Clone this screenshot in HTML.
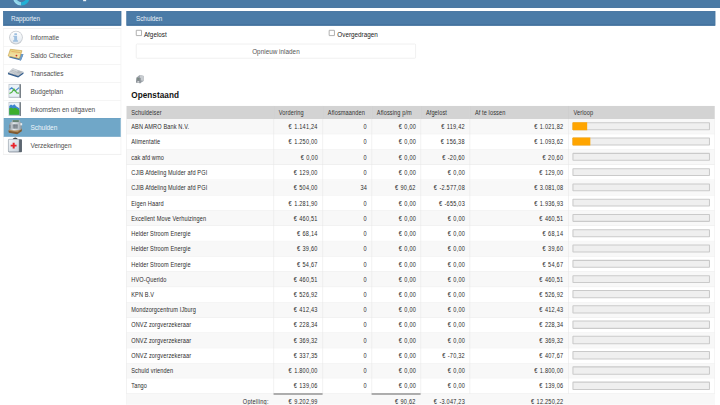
<!DOCTYPE html>
<html><head><meta charset="utf-8"><title>Schulden</title>
<style>
html,body{margin:0;padding:0;width:720px;height:405px;overflow:hidden;background:#fff;}
#w{position:absolute;left:0;top:0;width:1366px;height:768px;transform:scale(0.527086);transform-origin:0 0;font-family:"Liberation Sans",sans-serif;overflow:hidden;background:#fff;}
.abs{position:absolute;}
.topbar{left:0;top:0;width:1366px;height:14.4px;background:#4b7aa5;border-bottom:1px solid #3f6d98;}
.hdr{top:21.4px;height:26px;background:#4b7ba7;border:1px solid #44729d;box-shadow:inset 0 -1.5px 0 #3f6d98;color:#e9f0f6;font-size:12px;line-height:26px;}
.menu{left:6px;top:54px;width:222px;border:1px solid #ececec;border-top:1px solid #e6e6e6;}
.item{position:relative;height:33px;border-bottom:1px solid #ececec;font-size:12.4px;color:#505050;}
.item .t{position:absolute;left:50.8px;top:0;line-height:34px;letter-spacing:-0.1px;}
.item .ic{position:absolute;}
.item.act .t{top:1px;}
.item.act{background:#70a7c8;color:#eef5fa;border-bottom-color:#6299bf;box-shadow:inset 0 1px 0 #6299bf;margin-top:-1px;height:34px;}
.cb{width:11px;height:11px;border:1px solid #6a6a6a;border-radius:1px;background:#fff;box-sizing:border-box;}
.lbl{font-size:12px;color:#222;}
.btn{left:258px;top:82.8px;width:531px;height:28px;border:1px solid #e4e4e4;border-radius:2px;background:#fff;font-size:12px;color:#555;text-align:center;line-height:27px;box-sizing:border-box;letter-spacing:0.05px;padding-top:1px;}
.title{left:249px;top:171.3px;font-size:15.5px;font-weight:bold;color:#111;letter-spacing:0.1px;}
.c{position:absolute;box-sizing:border-box;font-size:12px;color:#2c2c2c;white-space:nowrap;overflow:hidden;}
.th{background:#d3d3d3;color:#333;padding-left:9px;}
.th span{position:relative;top:1.5px;}
.r{text-align:right;padding-right:8.5px;}
.c span{display:inline-block;letter-spacing:0.25px;transform:scaleX(0.885);transform-origin:0 50%;}
.r span{letter-spacing:0.5px;word-spacing:1px;transform:scaleX(0.88);transform-origin:100% 50%;}
.th span{letter-spacing:0.2px;transform:scaleX(0.89);}
.l{padding-left:9px;}
.bar{position:absolute;height:15.6px;box-sizing:border-box;border:2px solid #cacaca;border-radius:1.5px;background:#efefef;}
.fill{position:absolute;left:-2px;top:-2px;bottom:-2px;background:#ffa500;border-radius:1.5px 0 0 1.5px;}
</style></head><body><div id="w">

<div class="abs topbar"></div>
<div class="abs hdr" style="left:6px;width:222px;"><span style="padding-left:14px;letter-spacing:-0.15px">Rapporten</span></div>
<div class="abs hdr" style="left:240px;width:1115px;"><span style="padding-left:17px">Schulden</span></div>
<div class="abs menu">
<div class="item"><span class="t">Informatie</span></div>
<div class="item"><span class="t">Saldo Checker</span></div>
<div class="item"><span class="t">Transacties</span></div>
<div class="item"><span class="t">Budgetplan</span></div>
<div class="item"><span class="t">Inkomsten en uitgaven</span></div>
<div class="item act"><span class="t">Schulden</span></div>
<div class="item"><span class="t">Verzekeringen</span></div>
</div>
<div class="abs cb" style="left:258px;top:57px"></div><div class="abs lbl" style="left:273px;top:59px">Afgelost</div>
<div class="abs cb" style="left:624px;top:57px"></div><div class="abs lbl" style="left:640px;top:59px">Overgedragen</div>
<div class="abs btn">Opnieuw inladen</div>
<div class="abs title">Openstaand</div>
<div class="c th" style="left:240.00px;top:201px;width:278.50px;height:25px;line-height:25px;"><span>Schuldeiser</span></div>
<div class="c th" style="left:518.50px;top:201px;width:93.00px;height:25px;line-height:25px;border-left:1px solid #c6c6c6;"><span>Vordering</span></div>
<div class="c th" style="left:611.50px;top:201px;width:93.00px;height:25px;line-height:25px;border-left:1px solid #c6c6c6;"><span>Aflosmaanden</span></div>
<div class="c th" style="left:704.50px;top:201px;width:93.00px;height:25px;line-height:25px;border-left:1px solid #c6c6c6;"><span>Aflossing p/m</span></div>
<div class="c th" style="left:797.50px;top:201px;width:93.00px;height:25px;line-height:25px;border-left:1px solid #c6c6c6;"><span>Afgelost</span></div>
<div class="c th" style="left:890.50px;top:201px;width:187.00px;height:25px;line-height:25px;border-left:1px solid #c6c6c6;"><span>Af te lossen</span></div>
<div class="c th" style="left:1077.50px;top:201px;width:278.50px;height:25px;line-height:25px;border-left:1px solid #c6c6c6;"><span>Verloop</span></div>
<div class="abs" style="left:240px;top:226.00px;width:1116px;height:28.97px;background:#f8f8f8;border-bottom:1px solid #e9e9e9;box-sizing:border-box;"></div>
<div class="c l" style="left:240.00px;top:226.80px;width:278.50px;height:28.17px;line-height:28.97px;"><span>ABN AMRO Bank N.V.</span></div>
<div class="c r" style="left:518.50px;top:226.80px;width:93.00px;height:28.17px;line-height:28.97px;"><span>€ 1.141,24</span></div>
<div class="c r" style="left:611.50px;top:226.80px;width:93.00px;height:28.17px;line-height:28.97px;"><span>0</span></div>
<div class="c r" style="left:704.50px;top:226.80px;width:93.00px;height:28.17px;line-height:28.97px;"><span>€ 0,00</span></div>
<div class="c r" style="left:797.50px;top:226.80px;width:93.00px;height:28.17px;line-height:28.97px;"><span>€ 119,42</span></div>
<div class="c r" style="left:890.50px;top:226.80px;width:187.00px;height:28.17px;line-height:28.97px;"><span>€ 1.021,82</span></div>
<div class="bar" style="left:1086.40px;top:231.80px;width:261.00px;"><div class="fill" style="width:27.40px"></div></div>
<div class="abs" style="left:240px;top:254.97px;width:1116px;height:28.97px;background:#ffffff;border-bottom:1px solid #e9e9e9;box-sizing:border-box;"></div>
<div class="c l" style="left:240.00px;top:255.77px;width:278.50px;height:28.17px;line-height:28.97px;"><span>Alimentatie</span></div>
<div class="c r" style="left:518.50px;top:255.77px;width:93.00px;height:28.17px;line-height:28.97px;"><span>€ 1.250,00</span></div>
<div class="c r" style="left:611.50px;top:255.77px;width:93.00px;height:28.17px;line-height:28.97px;"><span>0</span></div>
<div class="c r" style="left:704.50px;top:255.77px;width:93.00px;height:28.17px;line-height:28.97px;"><span>€ 0,00</span></div>
<div class="c r" style="left:797.50px;top:255.77px;width:93.00px;height:28.17px;line-height:28.97px;"><span>€ 156,38</span></div>
<div class="c r" style="left:890.50px;top:255.77px;width:187.00px;height:28.17px;line-height:28.97px;"><span>€ 1.093,62</span></div>
<div class="bar" style="left:1086.40px;top:260.77px;width:261.00px;"><div class="fill" style="width:33.93px"></div></div>
<div class="abs" style="left:240px;top:283.94px;width:1116px;height:28.97px;background:#f8f8f8;border-bottom:1px solid #e9e9e9;box-sizing:border-box;"></div>
<div class="c l" style="left:240.00px;top:284.74px;width:278.50px;height:28.17px;line-height:28.97px;"><span>cak afd wmo</span></div>
<div class="c r" style="left:518.50px;top:284.74px;width:93.00px;height:28.17px;line-height:28.97px;"><span>€ 0,00</span></div>
<div class="c r" style="left:611.50px;top:284.74px;width:93.00px;height:28.17px;line-height:28.97px;"><span>0</span></div>
<div class="c r" style="left:704.50px;top:284.74px;width:93.00px;height:28.17px;line-height:28.97px;"><span>€ 0,00</span></div>
<div class="c r" style="left:797.50px;top:284.74px;width:93.00px;height:28.17px;line-height:28.97px;"><span>€ -20,60</span></div>
<div class="c r" style="left:890.50px;top:284.74px;width:187.00px;height:28.17px;line-height:28.97px;"><span>€ 20,60</span></div>
<div class="bar" style="left:1086.40px;top:289.74px;width:261.00px;"></div>
<div class="abs" style="left:240px;top:312.91px;width:1116px;height:28.97px;background:#ffffff;border-bottom:1px solid #e9e9e9;box-sizing:border-box;"></div>
<div class="c l" style="left:240.00px;top:313.71px;width:278.50px;height:28.17px;line-height:28.97px;"><span>CJIB Afdeling Mulder afd PGI</span></div>
<div class="c r" style="left:518.50px;top:313.71px;width:93.00px;height:28.17px;line-height:28.97px;"><span>€ 129,00</span></div>
<div class="c r" style="left:611.50px;top:313.71px;width:93.00px;height:28.17px;line-height:28.97px;"><span>0</span></div>
<div class="c r" style="left:704.50px;top:313.71px;width:93.00px;height:28.17px;line-height:28.97px;"><span>€ 0,00</span></div>
<div class="c r" style="left:797.50px;top:313.71px;width:93.00px;height:28.17px;line-height:28.97px;"><span>€ 0,00</span></div>
<div class="c r" style="left:890.50px;top:313.71px;width:187.00px;height:28.17px;line-height:28.97px;"><span>€ 129,00</span></div>
<div class="bar" style="left:1086.40px;top:318.71px;width:261.00px;"></div>
<div class="abs" style="left:240px;top:341.88px;width:1116px;height:28.97px;background:#f8f8f8;border-bottom:1px solid #e9e9e9;box-sizing:border-box;"></div>
<div class="c l" style="left:240.00px;top:342.68px;width:278.50px;height:28.17px;line-height:28.97px;"><span>CJIB Afdeling Mulder afd PGI</span></div>
<div class="c r" style="left:518.50px;top:342.68px;width:93.00px;height:28.17px;line-height:28.97px;"><span>€ 504,00</span></div>
<div class="c r" style="left:611.50px;top:342.68px;width:93.00px;height:28.17px;line-height:28.97px;"><span>34</span></div>
<div class="c r" style="left:704.50px;top:342.68px;width:93.00px;height:28.17px;line-height:28.97px;"><span>€ 90,62</span></div>
<div class="c r" style="left:797.50px;top:342.68px;width:93.00px;height:28.17px;line-height:28.97px;"><span>€ -2.577,08</span></div>
<div class="c r" style="left:890.50px;top:342.68px;width:187.00px;height:28.17px;line-height:28.97px;"><span>€ 3.081,08</span></div>
<div class="bar" style="left:1086.40px;top:347.68px;width:261.00px;"></div>
<div class="abs" style="left:240px;top:370.85px;width:1116px;height:28.97px;background:#ffffff;border-bottom:1px solid #e9e9e9;box-sizing:border-box;"></div>
<div class="c l" style="left:240.00px;top:371.65px;width:278.50px;height:28.17px;line-height:28.97px;"><span>Eigen Haard</span></div>
<div class="c r" style="left:518.50px;top:371.65px;width:93.00px;height:28.17px;line-height:28.97px;"><span>€ 1.281,90</span></div>
<div class="c r" style="left:611.50px;top:371.65px;width:93.00px;height:28.17px;line-height:28.97px;"><span>0</span></div>
<div class="c r" style="left:704.50px;top:371.65px;width:93.00px;height:28.17px;line-height:28.97px;"><span>€ 0,00</span></div>
<div class="c r" style="left:797.50px;top:371.65px;width:93.00px;height:28.17px;line-height:28.97px;"><span>€ -655,03</span></div>
<div class="c r" style="left:890.50px;top:371.65px;width:187.00px;height:28.17px;line-height:28.97px;"><span>€ 1.936,93</span></div>
<div class="bar" style="left:1086.40px;top:376.65px;width:261.00px;"></div>
<div class="abs" style="left:240px;top:399.82px;width:1116px;height:28.97px;background:#f8f8f8;border-bottom:1px solid #e9e9e9;box-sizing:border-box;"></div>
<div class="c l" style="left:240.00px;top:400.62px;width:278.50px;height:28.17px;line-height:28.97px;"><span>Excellent Move Verhuizingen</span></div>
<div class="c r" style="left:518.50px;top:400.62px;width:93.00px;height:28.17px;line-height:28.97px;"><span>€ 460,51</span></div>
<div class="c r" style="left:611.50px;top:400.62px;width:93.00px;height:28.17px;line-height:28.97px;"><span>0</span></div>
<div class="c r" style="left:704.50px;top:400.62px;width:93.00px;height:28.17px;line-height:28.97px;"><span>€ 0,00</span></div>
<div class="c r" style="left:797.50px;top:400.62px;width:93.00px;height:28.17px;line-height:28.97px;"><span>€ 0,00</span></div>
<div class="c r" style="left:890.50px;top:400.62px;width:187.00px;height:28.17px;line-height:28.97px;"><span>€ 460,51</span></div>
<div class="bar" style="left:1086.40px;top:405.62px;width:261.00px;"></div>
<div class="abs" style="left:240px;top:428.79px;width:1116px;height:28.97px;background:#ffffff;border-bottom:1px solid #e9e9e9;box-sizing:border-box;"></div>
<div class="c l" style="left:240.00px;top:429.59px;width:278.50px;height:28.17px;line-height:28.97px;"><span>Helder Stroom Energie</span></div>
<div class="c r" style="left:518.50px;top:429.59px;width:93.00px;height:28.17px;line-height:28.97px;"><span>€ 68,14</span></div>
<div class="c r" style="left:611.50px;top:429.59px;width:93.00px;height:28.17px;line-height:28.97px;"><span>0</span></div>
<div class="c r" style="left:704.50px;top:429.59px;width:93.00px;height:28.17px;line-height:28.97px;"><span>€ 0,00</span></div>
<div class="c r" style="left:797.50px;top:429.59px;width:93.00px;height:28.17px;line-height:28.97px;"><span>€ 0,00</span></div>
<div class="c r" style="left:890.50px;top:429.59px;width:187.00px;height:28.17px;line-height:28.97px;"><span>€ 68,14</span></div>
<div class="bar" style="left:1086.40px;top:434.59px;width:261.00px;"></div>
<div class="abs" style="left:240px;top:457.76px;width:1116px;height:28.97px;background:#f8f8f8;border-bottom:1px solid #e9e9e9;box-sizing:border-box;"></div>
<div class="c l" style="left:240.00px;top:458.56px;width:278.50px;height:28.17px;line-height:28.97px;"><span>Helder Stroom Energie</span></div>
<div class="c r" style="left:518.50px;top:458.56px;width:93.00px;height:28.17px;line-height:28.97px;"><span>€ 39,60</span></div>
<div class="c r" style="left:611.50px;top:458.56px;width:93.00px;height:28.17px;line-height:28.97px;"><span>0</span></div>
<div class="c r" style="left:704.50px;top:458.56px;width:93.00px;height:28.17px;line-height:28.97px;"><span>€ 0,00</span></div>
<div class="c r" style="left:797.50px;top:458.56px;width:93.00px;height:28.17px;line-height:28.97px;"><span>€ 0,00</span></div>
<div class="c r" style="left:890.50px;top:458.56px;width:187.00px;height:28.17px;line-height:28.97px;"><span>€ 39,60</span></div>
<div class="bar" style="left:1086.40px;top:463.56px;width:261.00px;"></div>
<div class="abs" style="left:240px;top:486.73px;width:1116px;height:28.97px;background:#ffffff;border-bottom:1px solid #e9e9e9;box-sizing:border-box;"></div>
<div class="c l" style="left:240.00px;top:487.53px;width:278.50px;height:28.17px;line-height:28.97px;"><span>Helder Stroom Energie</span></div>
<div class="c r" style="left:518.50px;top:487.53px;width:93.00px;height:28.17px;line-height:28.97px;"><span>€ 54,67</span></div>
<div class="c r" style="left:611.50px;top:487.53px;width:93.00px;height:28.17px;line-height:28.97px;"><span>0</span></div>
<div class="c r" style="left:704.50px;top:487.53px;width:93.00px;height:28.17px;line-height:28.97px;"><span>€ 0,00</span></div>
<div class="c r" style="left:797.50px;top:487.53px;width:93.00px;height:28.17px;line-height:28.97px;"><span>€ 0,00</span></div>
<div class="c r" style="left:890.50px;top:487.53px;width:187.00px;height:28.17px;line-height:28.97px;"><span>€ 54,67</span></div>
<div class="bar" style="left:1086.40px;top:492.53px;width:261.00px;"></div>
<div class="abs" style="left:240px;top:515.70px;width:1116px;height:28.97px;background:#f8f8f8;border-bottom:1px solid #e9e9e9;box-sizing:border-box;"></div>
<div class="c l" style="left:240.00px;top:516.50px;width:278.50px;height:28.17px;line-height:28.97px;"><span>HVO-Querido</span></div>
<div class="c r" style="left:518.50px;top:516.50px;width:93.00px;height:28.17px;line-height:28.97px;"><span>€ 460,51</span></div>
<div class="c r" style="left:611.50px;top:516.50px;width:93.00px;height:28.17px;line-height:28.97px;"><span>0</span></div>
<div class="c r" style="left:704.50px;top:516.50px;width:93.00px;height:28.17px;line-height:28.97px;"><span>€ 0,00</span></div>
<div class="c r" style="left:797.50px;top:516.50px;width:93.00px;height:28.17px;line-height:28.97px;"><span>€ 0,00</span></div>
<div class="c r" style="left:890.50px;top:516.50px;width:187.00px;height:28.17px;line-height:28.97px;"><span>€ 460,51</span></div>
<div class="bar" style="left:1086.40px;top:521.50px;width:261.00px;"></div>
<div class="abs" style="left:240px;top:544.67px;width:1116px;height:28.97px;background:#ffffff;border-bottom:1px solid #e9e9e9;box-sizing:border-box;"></div>
<div class="c l" style="left:240.00px;top:545.47px;width:278.50px;height:28.17px;line-height:28.97px;"><span>KPN B.V</span></div>
<div class="c r" style="left:518.50px;top:545.47px;width:93.00px;height:28.17px;line-height:28.97px;"><span>€ 526,92</span></div>
<div class="c r" style="left:611.50px;top:545.47px;width:93.00px;height:28.17px;line-height:28.97px;"><span>0</span></div>
<div class="c r" style="left:704.50px;top:545.47px;width:93.00px;height:28.17px;line-height:28.97px;"><span>€ 0,00</span></div>
<div class="c r" style="left:797.50px;top:545.47px;width:93.00px;height:28.17px;line-height:28.97px;"><span>€ 0,00</span></div>
<div class="c r" style="left:890.50px;top:545.47px;width:187.00px;height:28.17px;line-height:28.97px;"><span>€ 526,92</span></div>
<div class="bar" style="left:1086.40px;top:550.47px;width:261.00px;"></div>
<div class="abs" style="left:240px;top:573.64px;width:1116px;height:28.97px;background:#f8f8f8;border-bottom:1px solid #e9e9e9;box-sizing:border-box;"></div>
<div class="c l" style="left:240.00px;top:574.44px;width:278.50px;height:28.17px;line-height:28.97px;"><span>Mondzorgcentrum IJburg</span></div>
<div class="c r" style="left:518.50px;top:574.44px;width:93.00px;height:28.17px;line-height:28.97px;"><span>€ 412,43</span></div>
<div class="c r" style="left:611.50px;top:574.44px;width:93.00px;height:28.17px;line-height:28.97px;"><span>0</span></div>
<div class="c r" style="left:704.50px;top:574.44px;width:93.00px;height:28.17px;line-height:28.97px;"><span>€ 0,00</span></div>
<div class="c r" style="left:797.50px;top:574.44px;width:93.00px;height:28.17px;line-height:28.97px;"><span>€ 0,00</span></div>
<div class="c r" style="left:890.50px;top:574.44px;width:187.00px;height:28.17px;line-height:28.97px;"><span>€ 412,43</span></div>
<div class="bar" style="left:1086.40px;top:579.44px;width:261.00px;"></div>
<div class="abs" style="left:240px;top:602.61px;width:1116px;height:28.97px;background:#ffffff;border-bottom:1px solid #e9e9e9;box-sizing:border-box;"></div>
<div class="c l" style="left:240.00px;top:603.41px;width:278.50px;height:28.17px;line-height:28.97px;"><span>ONVZ zorgverzekeraar</span></div>
<div class="c r" style="left:518.50px;top:603.41px;width:93.00px;height:28.17px;line-height:28.97px;"><span>€ 228,34</span></div>
<div class="c r" style="left:611.50px;top:603.41px;width:93.00px;height:28.17px;line-height:28.97px;"><span>0</span></div>
<div class="c r" style="left:704.50px;top:603.41px;width:93.00px;height:28.17px;line-height:28.97px;"><span>€ 0,00</span></div>
<div class="c r" style="left:797.50px;top:603.41px;width:93.00px;height:28.17px;line-height:28.97px;"><span>€ 0,00</span></div>
<div class="c r" style="left:890.50px;top:603.41px;width:187.00px;height:28.17px;line-height:28.97px;"><span>€ 228,34</span></div>
<div class="bar" style="left:1086.40px;top:608.41px;width:261.00px;"></div>
<div class="abs" style="left:240px;top:631.58px;width:1116px;height:28.97px;background:#f8f8f8;border-bottom:1px solid #e9e9e9;box-sizing:border-box;"></div>
<div class="c l" style="left:240.00px;top:632.38px;width:278.50px;height:28.17px;line-height:28.97px;"><span>ONVZ zorgverzekeraar</span></div>
<div class="c r" style="left:518.50px;top:632.38px;width:93.00px;height:28.17px;line-height:28.97px;"><span>€ 369,32</span></div>
<div class="c r" style="left:611.50px;top:632.38px;width:93.00px;height:28.17px;line-height:28.97px;"><span>0</span></div>
<div class="c r" style="left:704.50px;top:632.38px;width:93.00px;height:28.17px;line-height:28.97px;"><span>€ 0,00</span></div>
<div class="c r" style="left:797.50px;top:632.38px;width:93.00px;height:28.17px;line-height:28.97px;"><span>€ 0,00</span></div>
<div class="c r" style="left:890.50px;top:632.38px;width:187.00px;height:28.17px;line-height:28.97px;"><span>€ 369,32</span></div>
<div class="bar" style="left:1086.40px;top:637.38px;width:261.00px;"></div>
<div class="abs" style="left:240px;top:660.55px;width:1116px;height:28.97px;background:#ffffff;border-bottom:1px solid #e9e9e9;box-sizing:border-box;"></div>
<div class="c l" style="left:240.00px;top:661.35px;width:278.50px;height:28.17px;line-height:28.97px;"><span>ONVZ zorgverzekeraar</span></div>
<div class="c r" style="left:518.50px;top:661.35px;width:93.00px;height:28.17px;line-height:28.97px;"><span>€ 337,35</span></div>
<div class="c r" style="left:611.50px;top:661.35px;width:93.00px;height:28.17px;line-height:28.97px;"><span>0</span></div>
<div class="c r" style="left:704.50px;top:661.35px;width:93.00px;height:28.17px;line-height:28.97px;"><span>€ 0,00</span></div>
<div class="c r" style="left:797.50px;top:661.35px;width:93.00px;height:28.17px;line-height:28.97px;"><span>€ -70,32</span></div>
<div class="c r" style="left:890.50px;top:661.35px;width:187.00px;height:28.17px;line-height:28.97px;"><span>€ 407,67</span></div>
<div class="bar" style="left:1086.40px;top:666.35px;width:261.00px;"></div>
<div class="abs" style="left:240px;top:689.52px;width:1116px;height:28.97px;background:#f8f8f8;border-bottom:1px solid #e9e9e9;box-sizing:border-box;"></div>
<div class="c l" style="left:240.00px;top:690.32px;width:278.50px;height:28.17px;line-height:28.97px;"><span>Schuld vrienden</span></div>
<div class="c r" style="left:518.50px;top:690.32px;width:93.00px;height:28.17px;line-height:28.97px;"><span>€ 1.800,00</span></div>
<div class="c r" style="left:611.50px;top:690.32px;width:93.00px;height:28.17px;line-height:28.97px;"><span>0</span></div>
<div class="c r" style="left:704.50px;top:690.32px;width:93.00px;height:28.17px;line-height:28.97px;"><span>€ 0,00</span></div>
<div class="c r" style="left:797.50px;top:690.32px;width:93.00px;height:28.17px;line-height:28.97px;"><span>€ 0,00</span></div>
<div class="c r" style="left:890.50px;top:690.32px;width:187.00px;height:28.17px;line-height:28.97px;"><span>€ 1.800,00</span></div>
<div class="bar" style="left:1086.40px;top:695.32px;width:261.00px;"></div>
<div class="abs" style="left:240px;top:718.49px;width:1116px;height:28.97px;background:#ffffff;border-bottom:1px solid #e9e9e9;box-sizing:border-box;"></div>
<div class="c l" style="left:240.00px;top:719.29px;width:278.50px;height:28.17px;line-height:28.97px;"><span>Tango</span></div>
<div class="c r" style="left:518.50px;top:719.29px;width:93.00px;height:28.17px;line-height:28.97px;"><span>€ 139,06</span></div>
<div class="c r" style="left:611.50px;top:719.29px;width:93.00px;height:28.17px;line-height:28.97px;"><span>0</span></div>
<div class="c r" style="left:704.50px;top:719.29px;width:93.00px;height:28.17px;line-height:28.97px;"><span>€ 0,00</span></div>
<div class="c r" style="left:797.50px;top:719.29px;width:93.00px;height:28.17px;line-height:28.97px;"><span>€ 0,00</span></div>
<div class="c r" style="left:890.50px;top:719.29px;width:187.00px;height:28.17px;line-height:28.97px;"><span>€ 139,06</span></div>
<div class="bar" style="left:1086.40px;top:724.29px;width:261.00px;"></div>
<div class="abs" style="left:518.50px;top:226px;width:1px;height:542px;background:#e6e6e6;"></div>
<div class="abs" style="left:611.50px;top:226px;width:1px;height:542px;background:#e6e6e6;"></div>
<div class="abs" style="left:704.50px;top:226px;width:1px;height:542px;background:#e6e6e6;"></div>
<div class="abs" style="left:797.50px;top:226px;width:1px;height:542px;background:#e6e6e6;"></div>
<div class="abs" style="left:890.50px;top:226px;width:1px;height:542px;background:#e6e6e6;"></div>
<div class="abs" style="left:1077.50px;top:226px;width:1px;height:542px;background:#e6e6e6;"></div>
<div class="abs" style="left:240px;top:226px;width:1px;height:542px;background:#e6e6e6;"></div>
<div class="abs" style="left:1355px;top:226px;width:1px;height:542px;background:#ececec;"></div>
<div class="abs" style="left:240px;top:747.46px;width:1116px;height:40px;background:#f8f8f8;"></div>
<div class="c r" style="left:240.00px;top:749.46px;width:278.50px;height:28.97px;line-height:28.97px;"><span>Optelling:</span></div>
<div class="c r" style="left:518.50px;top:749.46px;width:93.00px;height:28.97px;line-height:28.97px;"><span>€ 9.202,99</span></div>
<div class="c r" style="left:611.50px;top:749.46px;width:93.00px;height:28.97px;line-height:28.97px;"><span></span></div>
<div class="c r" style="left:704.50px;top:749.46px;width:93.00px;height:28.97px;line-height:28.97px;"><span>€ 90,62</span></div>
<div class="c r" style="left:797.50px;top:749.46px;width:93.00px;height:28.97px;line-height:28.97px;"><span>€ -3.047,23</span></div>
<div class="c r" style="left:890.50px;top:749.46px;width:187.00px;height:28.97px;line-height:28.97px;"><span>€ 12.250,22</span></div>
<div class="abs" style="left:518.50px;top:746.46px;width:93.00px;height:3px;background:#9a9a9a;"></div>
<div class="abs" style="left:704.50px;top:746.46px;width:93.00px;height:3px;background:#9a9a9a;"></div>
<svg class="abs" style="left:0;top:0;z-index:5" width="1366" height="768" viewBox="0 0 720 405">
<defs>
<linearGradient id="gInfo" x1="0" y1="0" x2="0" y2="1"><stop offset="0" stop-color="#ffffff"/><stop offset="1" stop-color="#e2e9f0"/></linearGradient>
<linearGradient id="gCard" x1="0" y1="0" x2="0" y2="1"><stop offset="0" stop-color="#e9d27a"/><stop offset="1" stop-color="#f3e7b8"/></linearGradient>
<linearGradient id="gReg" x1="0" y1="0" x2="1" y2="0"><stop offset="0" stop-color="#8d969e"/><stop offset="0.35" stop-color="#e3e8ec"/><stop offset="0.7" stop-color="#c2c9cf"/><stop offset="1" stop-color="#8a9298"/></linearGradient>
<linearGradient id="gBox" x1="0" y1="0" x2="1" y2="1"><stop offset="0" stop-color="#f2f5f8"/><stop offset="1" stop-color="#c8d2dc"/></linearGradient>
</defs>
<!-- logo -->
<g>
<path d="M12.8 -2.7 A8.3 8.3 0 0 0 21.1 5.6 L21.1 2.2 A4.9 4.9 0 0 1 16.2 -2.7 Z" fill="#8ad3ea"/>
<path d="M21.1 5.6 A8.3 8.3 0 0 0 29.4 -2.7 L26 -2.7 A4.9 4.9 0 0 1 21.1 2.2 Z" fill="#22b0d6"/>
<path d="M14.5 0.5 A7 7 0 0 0 19 4.5" stroke="#e6f6fb" stroke-width="0.5" stroke-dasharray="0.8 0.6" fill="none"/>
<rect x="83" y="0" width="3" height="1.2" fill="#eef3f8"/>
</g>
<!-- info -->
<circle cx="15.8" cy="37.55" r="6.9" fill="#c9cdd2"/><circle cx="15.8" cy="37.4" r="6.0" fill="url(#gInfo)"/>
<rect x="14.1" y="33.2" width="2.8" height="1.9" rx="0.6" fill="#9fc0e0"/>
<path d="M13.2 35.7 H16.9 V40.2 H17.8 V41.7 H12.9 V40.2 H14 V37 H13.2 Z" fill="#9fc0e0"/>
<!-- saldo -->
<path d="M11 52.5 L23.3 54.4 L20.7 60.5 L9 57.5 Z" fill="#3e72ab"/>
<path d="M20 54 L23.3 54.4 L20.7 60.5 L19 60 Z" fill="#6c9ccc"/>
<path d="M10.2 49.3 L21.8 50.7 L19.2 58.6 L8 56 Z" fill="url(#gCard)" stroke="#c49b3c" stroke-width="0.6"/>
<path d="M11.2 51.4 L20.5 52.7" stroke="#df9b52" stroke-width="0.6"/>
<circle cx="16.3" cy="55.6" r="0.9" fill="#cc3322"/>
<!-- transacties -->
<path d="M7.8 72.6 L18 75.8 L23.3 72.2 L23.3 73.9 L18 77.6 L7.8 74.2 Z" fill="#2c5a8e"/>
<path d="M8 72.7 L12.7 68.3 L23 71.8 L18 75.7 Z" fill="#b9bec4"/>
<path d="M8.6 72.4 L12.9 68.6 L17.6 70.2 L13.4 74 Z" fill="#d5d9dd"/>
<path d="M17.6 70.2 L22.6 71.9 L18 75.3 L13.4 74 Z" fill="#c3c8cd"/>
<path d="M10 71.3 L14.6 72.8 M11.2 70.1 L15.8 71.6 M16.5 72.7 L20.5 73 M17.8 71.7 L21.5 72.1" stroke="#8c9298" stroke-width="0.4"/>
<path d="M8 72.9 L18 76 L23.2 72.3" stroke="#7f8a96" stroke-width="0.5" fill="none"/>
<!-- budgetplan -->
<rect x="8.4" y="84" width="12.4" height="14" fill="#bcc3ca"/>
<path d="M19.3 84.6 L20.7 84.2 L20.7 98.2 L19.3 97.2 Z" fill="#6c757d"/>
<rect x="9.1" y="84.8" width="10" height="12" fill="#eaf2f8"/>
<path d="M9.3 89.5 L11.6 87.8 L14.9 91.1 L18.9 87.6" stroke="#3f86c6" stroke-width="1.1" fill="none"/>
<path d="M9.3 93.6 L11.6 92.4 L13.8 89.1 L16.7 92.9 L18.9 93.1" stroke="#55b648" stroke-width="1.2" fill="none"/>
<!-- inkomsten -->
<rect x="8.4" y="102" width="12.4" height="14" fill="#bcc3ca"/>
<path d="M19.3 102.6 L20.7 102.2 L20.7 116.2 L19.3 115.2 Z" fill="#6c757d"/>
<rect x="9.1" y="102.8" width="10" height="12" fill="#eaf2f8"/>
<path d="M9.1 106 L10.8 104.5 L12.5 105.6 L14.2 104.4 L16.3 106.6 L19.2 108.3 L19.2 114.7 L9.1 114.7 Z" fill="#3d86cf"/>
<path d="M9.1 108.4 L11 107.6 L13 108.6 L15 107.9 L17 108.8 L19.2 110.6 L19.2 114.7 L9.1 114.7 Z" fill="#3cae2c"/>
<!-- schulden register -->
<path d="M8.2 130.9 L10.4 128.9 L21.8 128.9 L21.6 131.3 L17.1 134.3 L8.7 132.8 Z" fill="#7e5a32"/>
<path d="M8.2 130.9 L10.4 128.9 L21.8 128.9 L17.4 132.3 Z" fill="#b18a56"/>
<path d="M9.2 129.8 L9.2 124.2 Q9.6 122 11.5 121.8 L19.8 121.8 Q21.4 122.2 21.4 124.4 L21.4 129.6 Q15 131.5 9.2 129.8 Z" fill="url(#gReg)"/>
<rect x="11.8" y="120.1" width="8" height="2.3" fill="#a7afb5"/>
<rect x="12.6" y="120.5" width="6" height="1.2" fill="#3f6a4c"/>
<rect x="12.4" y="124.2" width="5.4" height="4.6" fill="#98a1a8"/>
<path d="M12.6 125.6 H17.6 M12.6 127 H17.6 M14.2 124.3 V128.7 M15.9 124.3 V128.7" stroke="#5d666e" stroke-width="0.35"/>
<rect x="8.8" y="125" width="1.6" height="3.4" fill="#7f888f"/>
<rect x="20.2" y="123.2" width="1.8" height="2.2" fill="#e6eaee"/>
<!-- verzekeringen -->
<path d="M12.8 139.8 Q15.1 136.9 17.4 139.8" stroke="#3a3a3a" stroke-width="1.4" fill="none"/>
<rect x="8.2" y="139.3" width="13.6" height="13.1" rx="0.8" fill="#5c6670"/>
<rect x="8.2" y="139.3" width="10.6" height="12.6" rx="0.8" fill="url(#gBox)" stroke="#9aa5b0" stroke-width="0.4"/>
<path d="M12.5 142.7 H14.5 V144.7 H16.4 V146.6 H14.5 V148.6 H12.5 V146.6 H10.5 V144.7 H12.5 Z" fill="#e8222a"/>
<!-- calc icon -->
<path d="M136.5 77.5 L139.5 75 L143.8 76 L143.5 81 L140 83.4 L136 82.5 Z" fill="#9ea4aa"/>
<path d="M139.5 75 L143.8 76 L143.5 81 L140.5 80.3 Z" fill="#c8ccd0"/>
<path d="M136.5 77.5 L140.5 78 L140.3 83.3 L136 82.5 Z" fill="#878d93"/>
<rect x="137.3" y="78.4" width="1.6" height="1.1" fill="#6e8a74"/>
<ellipse cx="138.2" cy="82" rx="1.2" ry="0.6" fill="#eef0f2"/>
</svg>

</div></body></html>
